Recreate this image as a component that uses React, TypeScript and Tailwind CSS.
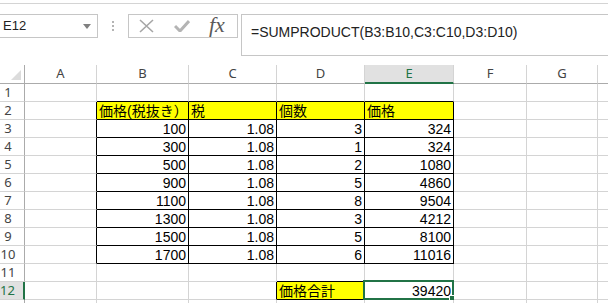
const cols = ["A", "B", "C", "D", "E", "F", "G", "H"];

const data: Record<string, string> = {
  B2: "価格(税抜き）",
  C2: "税",
  D2: "個数",
  E2: "価格",
  D12: "価格合計",
  E12: "39420",
};
const bvals = [100, 300, 500, 900, 1100, 1300, 1500, 1700];
const dvals = [3, 1, 2, 5, 8, 3, 5, 6];
const evals = [324, 324, 1080, 4860, 9504, 4212, 8100, 11016];
bvals.forEach((v, i) => {
  data["B" + (i + 3)] = String(v);
  data["C" + (i + 3)] = "1.08";
  data["D" + (i + 3)] = String(dvals[i]);
  data["E" + (i + 3)] = String(evals[i]);
});

const yellow = new Set(["B2", "C2", "D2", "E2", "D12"]);

function inBox(r: number, c: number) {
  // c index: A=0 ... H=7
  if (r >= 2 && r <= 10 && c >= 1 && c <= 4) return true;
  if (r === 12 && c >= 3 && c <= 4) return true;
  return false;
}

const font = { fontFamily: '"Liberation Sans", "Noto Sans CJK JP", sans-serif' };

function clsx(...a: (string | false | undefined)[]) {
  return a.filter(Boolean).join(" ");
}

function Cell({ r, c }: { r: number; c: number }) {
  const key = cols[c] + r;
  const text = data[key];
  const rightBlack = inBox(r, c) || inBox(r, c + 1);
  const bottomBlack = inBox(r, c) || inBox(r + 1, c);
  const isNum = text !== undefined && /^[0-9.]+$/.test(text);
  return (
    <div
      className={clsx(
        "relative h-[18px] border-r border-b flex items-center text-[14px] leading-none text-black",
        rightBlack ? "border-r-black" : "border-r-[#d4d4d4]",
        bottomBlack ? "border-b-black" : "border-b-[#d4d4d4]",
        yellow.has(key) ? "bg-[#ffff00]" : "bg-white",
        isNum ? "justify-end pr-[2px]" : "justify-start pl-[2px]"
      )}
    >
      {text && <span className="whitespace-nowrap pt-[1px]">{text}</span>}
      {key === "E12" && (
        <div className="absolute -left-[2px] -top-[2px] w-[91px] h-[20px] border-2 border-[#217346]">
          <div className="absolute -right-[3px] -bottom-[3px] w-[6px] h-[6px] bg-[#217346] border border-white" />
        </div>
      )}
    </div>
  );
}

function Row({ r }: { r: number }) {
  const sel = r === 12;
  return (
    <>
      <div
        className={clsx(
          "h-[18px] border-b border-b-[#d4d4d4] flex items-center justify-center pr-[8px] text-[13px]",
          sel
            ? "bg-[#e1e1e1] text-[#217346] border-r-2 border-r-[#217346]"
            : "bg-white text-[#444] border-r border-r-[#ababab]"
        )}
        style={{ fontFamily: '"Noto Sans", sans-serif' }}
      >
        {r < 13 ? r : ""}
      </div>
      {cols.map((_, c) => (
        <Cell key={c} r={r} c={c} />
      ))}
    </>
  );
}

export default function App() {
  const rows = Array.from({ length: 13 }, (_, i) => i + 1);
  return (
    <div className="w-[608px] h-[303px] overflow-hidden bg-white" style={font}>
      {/* formula bar */}
      <div className="h-[65px]">
        <div className="h-[4px] border-b border-[#d4d4d4]" />
        <div className="flex items-start mt-[10px]">
          <div className="w-[98px] h-[24px] border-y border-r border-[#c6c6c6] flex items-center pl-[3px] pr-[6px]">
            <span className="text-[13px] text-[#222] flex-1">E12</span>
            <svg width="8" height="5" viewBox="0 0 8 5">
              <path d="M0 0 H8 L4 5 Z" fill="#808080" />
            </svg>
          </div>
          <div className="w-[30px] h-[24px] flex flex-col items-center justify-center gap-[2px] pr-[1px]">
            <div className="w-[2px] h-[2px] bg-[#b4b4b4]" />
            <div className="w-[2px] h-[2px] bg-[#b4b4b4]" />
            <div className="w-[2px] h-[2px] bg-[#b4b4b4]" />
          </div>
          <div className="w-[110px] h-[24px] border border-[#c6c6c6] flex items-center pl-[10px]">
            <svg width="15" height="14" viewBox="0 0 15 14">
              <path d="M1 1 L14 13 M14 1 L1 13" stroke="#a6a6a6" strokeWidth="1.6" />
            </svg>
            <svg className="ml-[20px]" width="16" height="12" viewBox="0 0 16 12">
              <path d="M1 6 L6 11 L15 1" stroke="#b4b4b4" strokeWidth="3" fill="none" />
            </svg>
            <span
              className="ml-[19px] italic text-[22px] leading-none text-[#5a5a5a] -mt-[2px]"
              style={{ fontFamily: '"Liberation Serif", serif' }}
            >
              fx
            </span>
          </div>
          <div className="ml-[3px] flex-1 h-[42px] border-l border-y border-[#c6c6c6] pl-[9px] pt-[5px]">
            <span className="text-[14px] text-[#222]">=SUMPRODUCT(B3:B10,C3:C10,D3:D10)</span>
          </div>
        </div>
      </div>

      {/* grid */}
      <div className="grid w-max grid-cols-[25px_72px_92px_88px_88px_89px_73px_71px_72px]">
        <div className="h-[19px] border-r border-b border-r-[#ababab] border-b-[#ababab] relative">
          <svg className="absolute right-[3px] bottom-[3px]" width="10" height="10" viewBox="0 0 10 10">
            <path d="M10 0 V10 H0 Z" fill="#dcdcdc" />
          </svg>
        </div>
        {cols.map((c) => (
          <div
            key={c}
            className={clsx(
              "h-[19px] border-r border-r-[#d4d4d4] flex items-center justify-center text-[13px]",
              c === "E"
                ? "bg-[#e1e1e1] text-[#217346] border-b-2 border-b-[#217346]"
                : "bg-white text-[#444] border-b border-b-[#ababab]"
            )}
            style={{ fontFamily: '"Noto Sans", sans-serif' }}
          >
            {c === "H" ? "" : c}
          </div>
        ))}
        {rows.map((r) => (
          <Row key={r} r={r} />
        ))}
      </div>
    </div>
  );
}
